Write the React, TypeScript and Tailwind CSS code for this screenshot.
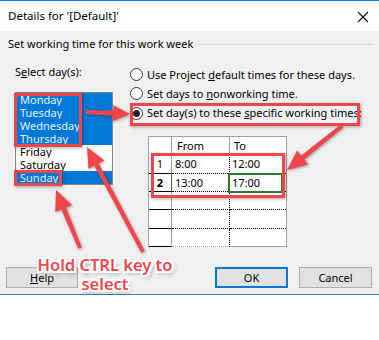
import React from "react";

type Pt = [number, number];

function arrowPoints(tail: Pt, tip: Pt, w: number, L: number, H: number): string {
  const dx = tip[0] - tail[0];
  const dy = tip[1] - tail[1];
  const len = Math.hypot(dx, dy);
  const ux = dx / len;
  const uy = dy / len;
  const nx = -uy;
  const ny = ux;
  const bx = tip[0] - ux * L;
  const by = tip[1] - uy * L;
  const pts: Pt[] = [
    [tail[0] + (nx * w) / 2.6, tail[1] + (ny * w) / 2.6],
    [bx + (nx * w) / 2, by + (ny * w) / 2],
    [bx + nx * H, by + ny * H],
    [tip[0], tip[1]],
    [bx - nx * H, by - ny * H],
    [bx - (nx * w) / 2, by - (ny * w) / 2],
    [tail[0] - (nx * w) / 2.6, tail[1] - (ny * w) / 2.6],
  ];
  return pts.map((p) => `${p[0].toFixed(1)},${p[1].toFixed(1)}`).join(" ");
}

const RED = "#f0464b";

function Radio({ checked }: { checked?: boolean }) {
  return (
    <div className="w-[13px] h-[13px] rounded-full border border-[#333333] bg-white flex items-center justify-center shrink-0">
      {checked ? <div className="w-[7px] h-[7px] rounded-full bg-[#222222]" /> : null}
    </div>
  );
}

const days = [
  { d: "Monday", s: true },
  { d: "Tuesday", s: true },
  { d: "Wednesday", s: true },
  { d: "Thursday", s: true },
  { d: "Friday", s: false },
  { d: "Saturday", s: false },
  { d: "Sunday", s: true },
];

export default function App() {
  return (
    <div className="relative w-[379px] h-[340px] bg-white overflow-hidden font-['Noto_Sans',sans-serif] text-[11px] text-[#000000] leading-[16px] whitespace-nowrap">
      {/* Title bar */}
      <div className="h-[31px] border-t border-[#1a7fd8] bg-white flex items-center pl-[8px] pr-[10px]">
        <span className="flex-1 text-[11.5px]">Details for '[Default]'</span>
        <svg width="12" height="12" viewBox="0 0 12 12" className="mt-[1px]">
          <path d="M1 1 L11 11 M11 1 L1 11" stroke="#111" strokeWidth="1.1" fill="none" />
        </svg>
      </div>

      {/* Body */}
      <div className="h-[264px] bg-[#f0f0f0] border-b border-[#2b7fd4] flex flex-col">
        <div className="h-[26px] flex items-center pl-[8px] pr-[6px]">
          <span>Set working time for this work week</span>
          <div className="flex-1 h-px bg-[#d8d8d8] ml-[3px]" />
        </div>

        <div className="flex">
          {/* Left column */}
          <div className="ml-[15px] flex flex-col">
            <div className="mt-[7px] h-[16px]">
              S<span className="underline">e</span>lect day(s):
            </div>
            <div className="mt-[12px] w-[98px] h-[93px] border border-[#828790] bg-white flex flex-col">
              {days.map((x) => (
                <div
                  key={x.d}
                  className={
                    "h-[13px] leading-[13px] pl-[4px] " +
                    (x.s ? "bg-[#0078d7] text-[#e6f1fb]" : "bg-white text-black")
                  }
                >
                  {x.d}
                </div>
              ))}
            </div>
          </div>

          {/* Right column */}
          <div className="ml-[17px] flex flex-col">
            <div className="mt-[8px] h-[19px] flex items-center gap-[4px]">
              <Radio />
              <span>
                Use Project <span className="underline">d</span>efault times for these days.
              </span>
            </div>
            <div className="h-[19px] flex items-center gap-[4px]">
              <Radio />
              <span>
                Set days to <span className="underline">n</span>onworking time.
              </span>
            </div>
            <div className="h-[20px] flex items-center gap-[4px]">
              <Radio checked />
              <span>
                Set day(s) to these <span className="underline">s</span>pecific working times:
              </span>
            </div>

            {/* Table */}
            <div className="mt-[13px] ml-[18px] w-[139px] border-t border-l border-r border-[#a0a0a0] bg-white flex flex-col">
              <div className="flex h-[17px]">
                <div className="w-[23px] border-r border-[#a0a0a0]" />
                <div className="w-[58px] border-r border-[#a0a0a0] pl-[5px] leading-[17px]">From</div>
                <div className="flex-1 pl-[4px] leading-[17px]">To</div>
              </div>
              {[
                { n: "1", f: "8:00", t: "12:00", h: "h-[20px]" },
                { n: "2", f: "13:00", t: "17:00", h: "h-[18px]", sel: true },
                { n: "", f: "", t: "", h: "h-[18px]" },
                { n: "", f: "", t: "", h: "h-[19px]" },
                { n: "", f: "", t: "", h: "h-[18px]", last: true },
              ].map((r, i) => (
                <div key={i} className={"flex " + r.h}>
                  <div
                    className={
                      "w-[23px] border-b border-black border-r flex items-center justify-center " +
                      (r.sel ? "border-r-[#2e7a2e] font-bold " : "border-r-[#a0a0a0] ")
                    }
                  >
                    {r.n}
                  </div>
                  <div
                    className={
                      "w-[58px] border-r border-b flex items-center pl-[3px] " +
                      (r.last ? "border-r-black border-dotted border-b-[#a0a0a0]" : "border-black border-dotted")
                    }
                  >
                    {r.f}
                  </div>
                  <div
                    className={
                      "relative flex-1 border-b flex items-center pl-[2px] " +
                      (r.last ? "border-solid border-[#a0a0a0]" : "border-black border-dotted")
                    }
                  >
                    {r.t}
                    {r.sel ? (
                      <div className="absolute left-[-2px] top-[-1px] w-[55px] h-[20px] border-2 border-[#2e7a2e]" />
                    ) : null}
                  </div>
                </div>
              ))}
            </div>
          </div>
        </div>

        {/* Buttons */}
        <div className="mt-[20px] flex items-center pl-[6px] pr-[7px]">
          <div className="w-[72px] h-[21px] border border-[#adadad] bg-[#e1e1e1] flex items-center justify-center">
            <span>
              <span className="underline">H</span>elp
            </span>
          </div>
          <div className="flex-1" />
          <div className="w-[73px] h-[21px] border-2 border-[#0078d7] bg-[#e1e1e1] flex items-center justify-center">
            OK
          </div>
          <div className="w-[73px] h-[21px] ml-[11px] border border-[#adadad] bg-[#e1e1e1] flex items-center justify-center">
            Cancel
          </div>
        </div>
      </div>

      {/* Annotations: red boxes */}
      <div className="absolute left-[14px] top-[93px] w-[68px] h-[54px] border-[3px] border-[#f0464b] shadow-[1px_1px_3px_rgba(0,0,0,0.35)]" />
      <div className="absolute left-[14px] top-[170px] w-[48px] h-[16px] border-[3px] border-[#f0464b] shadow-[1px_1px_3px_rgba(0,0,0,0.35)]" />
      <div className="absolute left-[130px] top-[103px] w-[230px] h-[23px] border-[3px] border-[#f0464b] shadow-[1px_1px_3px_rgba(0,0,0,0.35)]" />
      <div className="absolute left-[151px] top-[153px] w-[134px] h-[45px] border-[3px] border-[#f0464b] shadow-[1px_1px_3px_rgba(0,0,0,0.35)]" />

      {/* Arrows */}
      <svg
        className="absolute inset-0 pointer-events-none"
        width="379"
        height="340"
        viewBox="0 0 379 340"
        style={{ filter: "drop-shadow(1px 1px 1.5px rgba(0,0,0,0.35))" }}
      >
        <polygon points={arrowPoints([86, 112], [130, 114], 5, 17, 8)} fill={RED} />
        <polygon points={arrowPoints([342, 126], [287, 170], 5, 20, 9)} fill={RED} />
        <polygon points={arrowPoints([80, 248], [56, 190], 5, 20, 9)} fill={RED} />
        <polygon points={arrowPoints([143, 252], [87, 147], 5, 20, 9)} fill={RED} />
      </svg>

      {/* Label */}
      <div className="absolute left-[15px] top-[255px] w-[180px] text-center text-[16.5px] leading-[19px] font-semibold text-[#f0464b] [text-shadow:2px_0_0_#fff,-2px_0_0_#fff,0_2px_0_#fff,0_-2px_0_#fff,2px_2px_0_#fff,-2px_-2px_0_#fff,2px_-2px_0_#fff,-2px_2px_0_#fff,2px_3px_4px_rgba(0,0,0,0.45)]">
        Hold CTRL key to
        <br />
        select
      </div>
    </div>
  );
}
